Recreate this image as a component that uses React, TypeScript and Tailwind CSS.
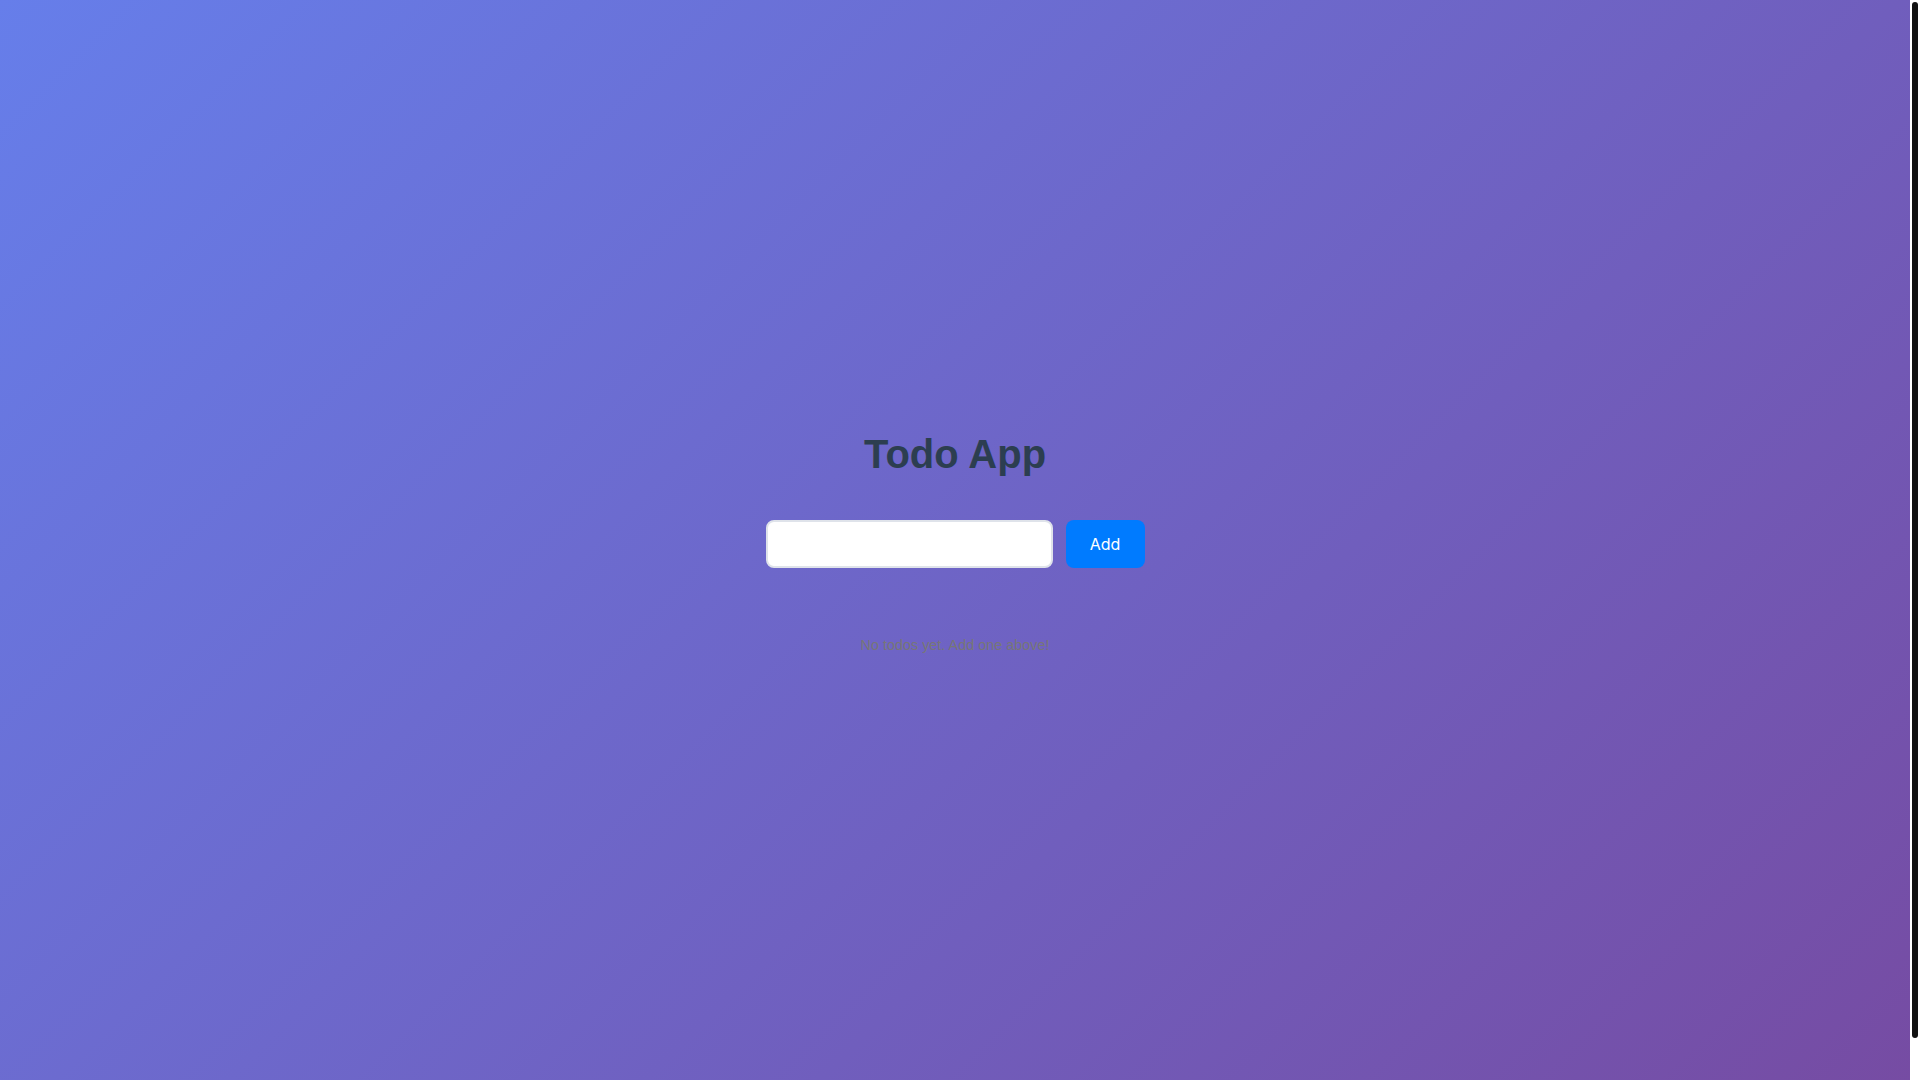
import { useState } from "react";

interface Todo {
  id: number;
  text: string;
  done: boolean;
}

export default function App() {
  const [todos, setTodos] = useState<Todo[]>([]);
  const [text, setText] = useState("");

  const addTodo = () => {
    if (!text.trim()) return;
    setTodos((prev) => [...prev, { id: Date.now(), text: text.trim(), done: false }]);
    setText("");
  };

  return (
    <div className="flex h-screen overflow-hidden bg-white">
      <div className="flex-1 overflow-hidden">
        <div className="bg-[linear-gradient(135deg,#667eea_0%,#764ba2_100%)] pb-[42px]">
          <div className="h-screen flex items-center justify-center">
            <div className="flex flex-col items-center pt-[4px]">
              <h1 className="text-[40px] leading-[46px] font-bold text-[#2c3e50] font-['Liberation_Sans',Arial,sans-serif]">
                Todo App
              </h1>

              {/* form */}
              <div className="flex gap-[13px] mt-[43px]">
                <input
                  type="text"
                  value={text}
                  onChange={(e) => setText(e.target.value)}
                  onKeyDown={(e) => e.key === "Enter" && addTodo()}
                  className="w-[287px] h-12 bg-white border-2 border-[#dfe3ea] rounded-lg px-3 text-base font-['Inter',sans-serif] outline-none"
                />
                <button
                  onClick={addTodo}
                  className="w-[79px] h-12 bg-[#007bff] text-white rounded-lg text-base font-['Inter',sans-serif]"
                >
                  Add
                </button>
              </div>

              {/* list */}
              {todos.length === 0 ? (
                <p className="mt-[69px] text-[14.4px] leading-[16.5px] text-[#777] font-['Liberation_Sans',Arial,sans-serif]">
                  No todos yet. Add one above!
                </p>
              ) : (
                <ul className="mt-8 w-[379px] flex flex-col gap-2">
                  {todos.map((t) => (
                    <li key={t.id} className="bg-white rounded-lg px-4 py-3 text-sm text-[#2c3e50]">
                      {t.text}
                    </li>
                  ))}
                </ul>
              )}
            </div>
          </div>
        </div>
      </div>

      {/* scrollbar */}
      <div className="w-[10px] shrink-0 bg-white px-[2px] pt-[2px]">
        <div className="h-[1036px] rounded-[3px] bg-[#111]" />
      </div>
    </div>
  );
}
